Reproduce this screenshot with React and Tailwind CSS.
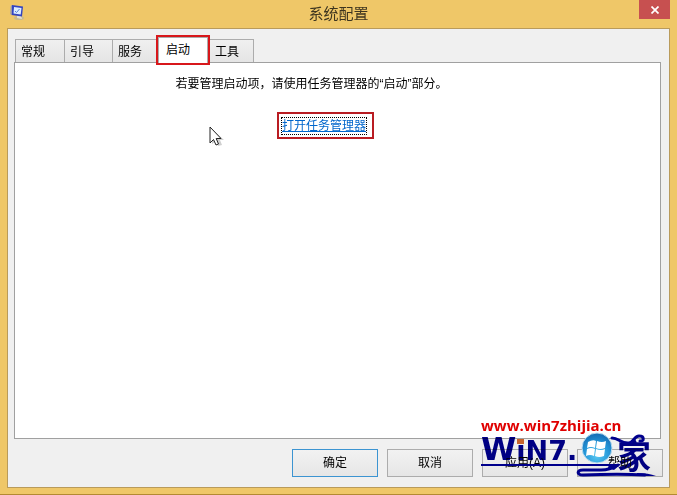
import React from "react";

const tabs = [
  { label: "常规", width: "w-[50px]" },
  { label: "引导", width: "w-[49px]" },
  { label: "服务", width: "w-[46px]" },
  { label: "启动", width: "w-[50px]", active: true },
  { label: "工具", width: "w-[45px]" },
];

function AppIcon() {
  return (
    <svg viewBox="0 0 16 16" className="h-4 w-4" aria-hidden="true">
      <ellipse cx="9" cy="13" rx="5" ry="2" fill="#c9b98c" />
      <path d="M7 10l4 1 1 3-5-1z" fill="#e2dfd5" />
      <path d="M2 0l11 1.500-1 10-10.500-1.500z" fill="#3344c0" />
      <path d="M4 2l7.500 1-.8 6.500L3.500 8.500z" fill="#dcecff" />
      <path d="M5 6l1.500 1.500L9.500 4" fill="none" stroke="#5a83d6" />
      <path d="M2 0L1.500 10 .3 9 .8 1z" fill="#8c96bd" />
    </svg>
  );
}

function Cursor() {
  return (
    <svg viewBox="0 0 15 22" className="absolute left-[194px] top-[63px] h-[22px] w-[15px]" aria-hidden="true">
      <path d="M3 3v15l4-3 2 5 4-1-2-5h4z" fill="#cfcfcf" />
      <path d="M1 1v16l3.500-3.500L7 19l2.500-1L7.200 12.500H12z" fill="#fff" stroke="#222" />
    </svg>
  );
}

function Watermark() {
  return (
    <div className="pointer-events-none absolute -top-6 right-0 h-[64px] w-[182px] text-[#00008c]">
      <div className="font-['Open_Sans','Noto_Sans',sans-serif] text-[15px] leading-5 font-bold whitespace-nowrap text-[#e00000]">
        www.win7zhijia.cn
      </div>
      <div className="absolute top-[18px] left-0 flex items-baseline font-['DejaVu_Sans',sans-serif] text-[27px] leading-8 font-bold whitespace-nowrap mix-blend-multiply">
        <span className="text-[32px]">W</span>iN7.
      </div>
      <span className="absolute top-[20px] left-[136px] font-['Noto_Sans_CJK_SC',sans-serif] text-[34px] leading-10 font-bold mix-blend-multiply">家</span>
      <svg viewBox="0 0 182 64" className="absolute inset-0 h-full w-full" aria-hidden="true">
        <defs>
          <radialGradient id="orb" cx="50%" cy="75%" r="70%">
            <stop offset="0" stopColor="#58c8f2" />
            <stop offset=".6" stopColor="#2496d8" />
            <stop offset="1" stopColor="#1870b8" />
          </radialGradient>
        </defs>
        <path d="M36 24h7v5h-7z" fill="#c8642d" />
        <g fill="none" stroke="#00008c" strokeLinecap="round" strokeLinejoin="round">
          <path d="M0 50h132" strokeWidth="2" />
          <path d="M137 50c-5 3-10 5-17 5h-18c-6 0-7 5 0 5 25-1 45-1 62 0" strokeWidth="3" />
          <path d="M131 23c7 0 9 6 17 5 5-1 5-7 10-7 6 0 5 6 1 5" strokeWidth="3" />
        </g>
        <path d="M128 49h12l-7 6-6-2z" fill="#00008c" />
        <path d="M156 58c8 0 14 1 19 3h-19z" fill="#00008c" />
        <circle cx="116" cy="33" r="15" fill="url(#orb)" stroke="#b9dcf0" />
        <path d="M107 27q5-3 8-1l-1 7q-4-2-8 0zM116 26q5 2 9 0l-1 7q-5 2-9 0zM106 34q4-2 8 0l-1 7q-4-2-8 0zM115 34q5 2 9 0l-1 7q-5 2-9 0z" fill="#fff" />
      </svg>
    </div>
  );
}

const buttonClass =
  "h-7 w-[86px] border bg-linear-to-b from-[#f2f2f2] to-[#e6e6e6] text-center text-xs text-black";

export default function App() {
  return (
    <main className="flex min-h-screen flex-col border-b border-[#b38a32] bg-[#efc768] px-[7px] pb-[6px] font-['Liberation_Sans','Noto_Sans_CJK_SC',sans-serif] text-xs text-black">
      <header className="grid h-7 grid-cols-[1fr_auto_1fr]">
        <div className="pt-[5px] pl-[3px]"><AppIcon /></div>
        <h1 className="text-[15px] leading-7 text-[#3e351f]">系统配置</h1>
        <button aria-label="关闭" className="flex h-[19px] w-[31px] items-center justify-center justify-self-end bg-[#c75050]">
          <svg viewBox="0 0 8 8" className="h-2 w-2" aria-hidden="true"><path d="M.5.5l7 7M7.500.5l-7 7" stroke="#fff" strokeWidth="1.700" /></svg>
        </button>
      </header>
      <section className="flex flex-1 flex-col border border-[#b99b5b] bg-[#f0f0f0] px-[6px] pt-[9px]">
        <div role="tablist" className="flex h-6 items-end pl-px">
          {tabs.map((t) => (
            <button
              key={t.label}
              role="tab"
              aria-selected={!!t.active}
              className={
                t.active
                  ? `${t.width} relative z-10 mr-px -mb-px ml-px h-[26px] border border-b-0 border-[#acacac] bg-white pb-[2px] pl-[7px] text-left outline-2 outline-[#d8171b]`
                  : `${t.width} -mr-px h-[23px] border border-b-0 border-[#acacac] bg-linear-to-b from-[#f0f0f0] to-[#e5e5e5] pt-px pl-[5px] text-left`
              }
            >
              {t.label}
            </button>
          ))}
        </div>
        <div role="tabpanel" className="relative mr-[2px] flex flex-1 flex-col border border-[#a0a0a0] bg-white text-center">
          <p className="pt-[13px] pr-[52px] leading-4">若要管理启动项，请使用任务管理器的“启动”部分。</p>
          <div className="pt-5 pr-6">
            <a href="#task-manager" className="inline-block border-2 border-[#b91c22] pt-[3px] pr-[5px] pb-[2px] pl-[2px] text-[#0066cc]">
              <span className="block border border-dotted border-black leading-4 underline">打开任务管理器</span>
            </a>
          </div>
          <Cursor />
        </div>
        <footer className="relative flex h-12 items-center justify-end gap-[9px]">
          <button className={`${buttonClass} border-[#3c94d1]`}>确定</button>
          <button className={`${buttonClass} border-[#acacac]`}>取消</button>
          <button className={`${buttonClass} border-[#acacac]`}>应用(A)</button>
          <button className={`${buttonClass} border-[#acacac]`}>帮助</button>
          <Watermark />
        </footer>
      </section>
    </main>
  );
}
